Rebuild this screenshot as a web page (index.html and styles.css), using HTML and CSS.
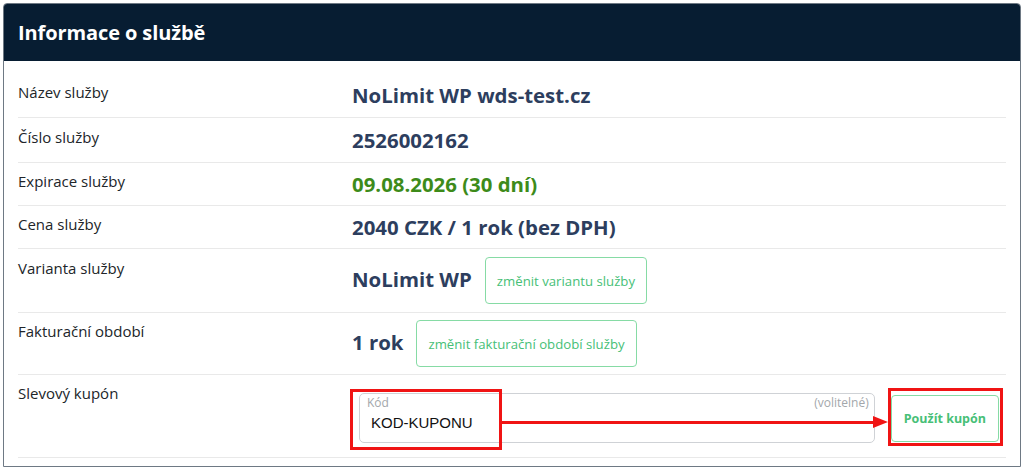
FILE: index.html
```html
<!DOCTYPE html>
<html lang="cs">
  <head>
    <meta charset="UTF-8"/>
    <meta name="viewport" content="width=device-width, initial-scale=1.0"/>
    <link rel="stylesheet" href="styles.css">
    <title>Informace o službě</title>
  </head>
  <body>
    <div class="card">
      <div class="card-header">
        <h2>Informace o službě</h2>
      </div>

      <div class="card-body">
        <div class="row row-first">
          <div class="label">Název služby</div>
          <div class="value">NoLimit WP wds-test.cz</div>
        </div>

        <div class="row row-tall">
          <div class="label">Číslo služby</div>
          <div class="value">2526002162</div>
        </div>

        <div class="row">
          <div class="label">Expirace služby</div>
          <div class="value ok">09.08.2026 (30 dní)</div>
        </div>

        <div class="row">
          <div class="label">Cena služby</div>
          <div class="value">2040 CZK / 1 rok (bez DPH)</div>
        </div>

        <div class="row row-tall">
          <div class="label">Varianta služby</div>
          <div class="value with-btn">
            <span>NoLimit WP</span>
            <a class="btn" href="#">změnit variantu služby</a>
          </div>
        </div>

        <div class="row">
          <div class="label">Fakturační období</div>
          <div class="value with-btn">
            <span>1 rok</span>
            <a class="btn" href="#">změnit fakturační období služby</a>
          </div>
        </div>

        <div class="row coupon-row">
          <div class="label">Slevový kupón</div>
          <div class="coupon">
            <label class="field">
              <span class="field-top">
                <span>Kód</span>
                <span>(volitelné)</span>
              </span>
              <input type="text" value="KOD-KUPONU">
            </label>
            <a class="btn btn-strong" href="#">Použít kupón</a>
          </div>

          <!-- annotation drawn over the screenshot -->
          <div class="mark mark-code"></div>
          <div class="mark mark-apply"></div>
          <div class="arrow-line"></div>
          <div class="arrow-head"></div>
        </div>
      </div>
    </div>
  </body>
</html>
```

FILE: styles.css
```css
*{
  box-sizing: border-box;
  margin: 0;
}

body{
  font-family: "Open Sans", sans-serif;
  background: #fff;
  padding: 3px 3px 0 3px;
  color: #212529;
}

.card{
  border: 1px solid #6e7984;
  border-radius: 4px 4px 0 0;
  overflow: hidden;
}

.card-header{
  background: #071d32;
  height: 57px;
  display: flex;
  align-items: center;
  padding: 0 14px;
}

.card-header h2{
  color: #fff;
  font-size: 20px;
  font-weight: 700;
  letter-spacing: -0.1px;
}

.card-body{
  padding: 13px 14px 8px 14px;
}

.row{
  display: grid;
  grid-template-columns: 334px 1fr;
  padding: 7px 0;
  border-bottom: 1px solid #e9e9e9;
}

.row-first{
  padding-bottom: 8px;
}

.row-tall{
  padding: 8px 0;
}

.label{
  font-size: 15px;
  line-height: 20px;
  padding-top: 1px;
}

.value{
  font-size: 20.4px;
  font-weight: 700;
  line-height: 28px;
  color: #2d3e5e;
}

.value.ok{
  color: #3d8b1a;
}

.value.with-btn{
  display: flex;
  align-items: center;
  gap: 13px;
}

.with-btn span{
  position: relative;
  top: -2px;
}

.btn{
  display: inline-flex;
  align-items: center;
  height: 47px;
  padding: 0 11px;
  border: 1px solid #86dba5;
  border-radius: 4px;
  font-size: 13.2px;
  font-weight: 400;
  color: #47bf77;
  text-decoration: none;
  background: #fff;
}

.btn-strong{
  font-size: 12.5px;
  font-weight: 700;
  padding: 0 12px;
}

.coupon-row{
  position: relative;
  padding-bottom: 14px;
}

.coupon{
  display: flex;
  align-items: center;
  gap: 16px;
  padding: 11px 7px 0 7px;
}

.field{
  flex: 1;
  height: 50px;
  border: 1px solid #cfd2d6;
  border-radius: 5px;
  padding: 0 5px 0 7px;
  display: flex;
  flex-direction: column;
}

.field-top{
  display: flex;
  justify-content: space-between;
  font-size: 12px;
  line-height: 17px;
  color: #a3a7ab;
}

.field input{
  border: 0;
  outline: none;
  padding: 0 0 0 4px;
  font-family: "Liberation Sans", Arial, sans-serif;
  font-size: 15px;
  line-height: 24px;
  color: #111;
  background: transparent;
}

.mark{
  position: absolute;
  border: 3px solid #f01414;
}

.mark-code{
  left: 332px;
  top: 14px;
  width: 152px;
  height: 61px;
}

.mark-apply{
  left: 870px;
  top: 13px;
  width: 115px;
  height: 58px;
}

.arrow-line{
  position: absolute;
  left: 484px;
  top: 46px;
  width: 372px;
  height: 3px;
  background: #f01414;
}

.arrow-head{
  position: absolute;
  left: 855px;
  top: 41px;
  width: 0;
  height: 0;
  border-left: 15px solid #f01414;
  border-top: 6.5px solid transparent;
  border-bottom: 6.5px solid transparent;
}
```
